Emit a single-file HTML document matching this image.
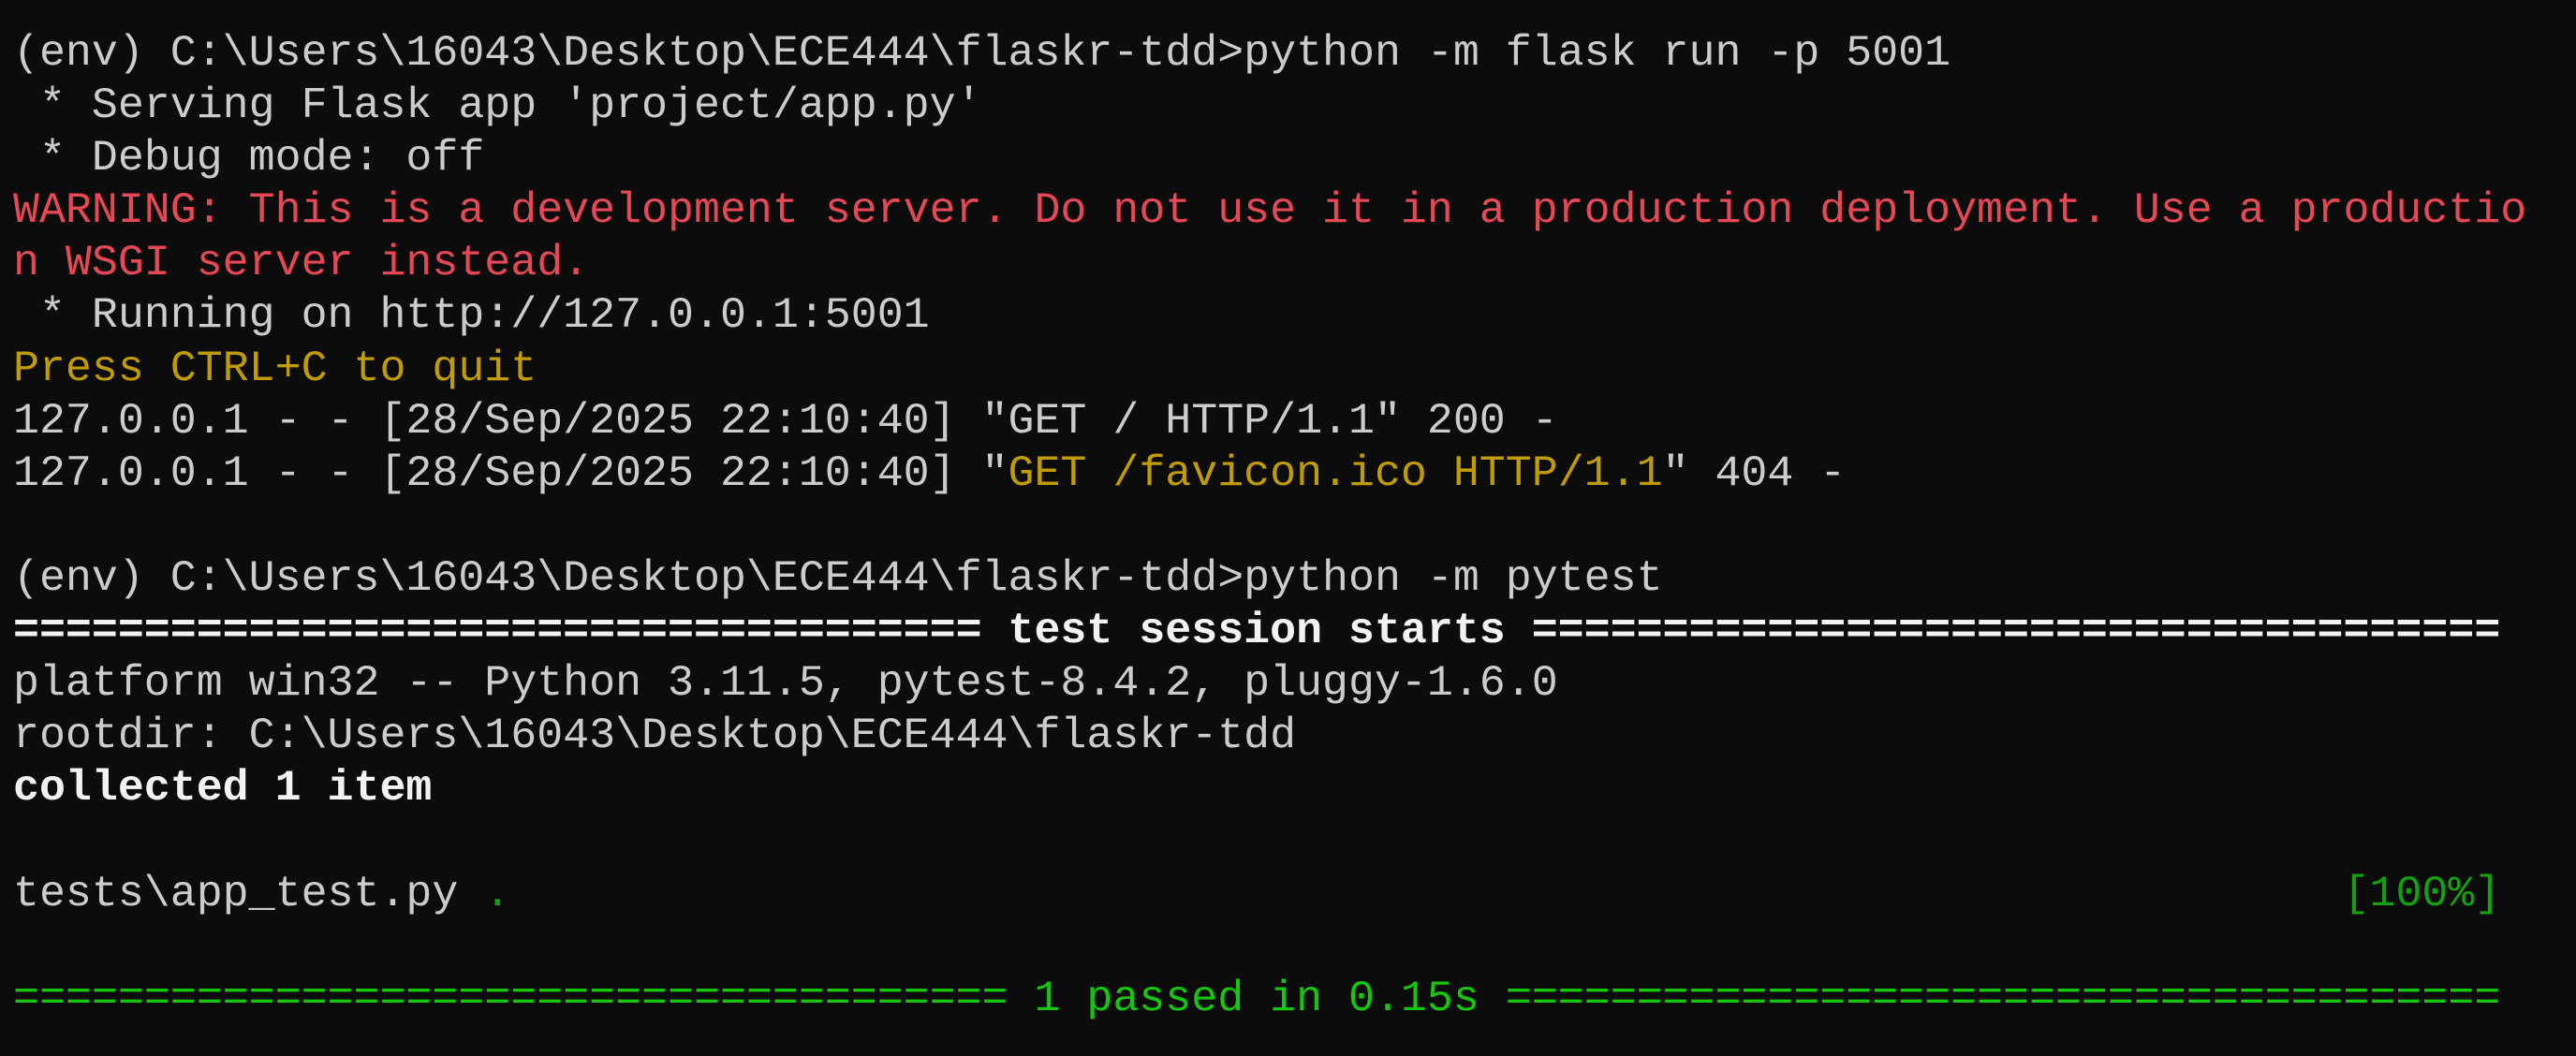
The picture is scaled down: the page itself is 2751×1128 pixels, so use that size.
<!DOCTYPE html>
<html><head><meta charset="utf-8"><style>
html,body{margin:0;padding:0;background:#0c0c0c;width:2751px;height:1128px;overflow:hidden}
pre{margin:0;padding:29px 0 0 14px;font-family:"Liberation Mono",monospace;font-size:46.6px;line-height:56.1px;color:#cccccc;white-space:pre}
.r{color:#e74856}.y{color:#c19c00}.g{color:#13a10e}.b{color:#f2f2f2;font-weight:bold}
.gb{color:#16c60c}
</style></head><body><pre>(env) C:\Users\16043\Desktop\ECE444\flaskr-tdd&gt;python -m flask run -p 5001
 * Serving Flask app 'project/app.py'
 * Debug mode: off
<span class="r">WARNING: This is a development server. Do not use it in a production deployment. Use a productio
n WSGI server instead.</span>
 * Running on http://127.0.0.1:5001
<span class="y">Press CTRL+C to quit</span>
127.0.0.1 - - [28/Sep/2025 22:10:40] "GET / HTTP/1.1" 200 -
127.0.0.1 - - [28/Sep/2025 22:10:40] "<span class="y">GET /favicon.ico HTTP/1.1</span>" 404 -

(env) C:\Users\16043\Desktop\ECE444\flaskr-tdd&gt;python -m pytest
<span class="b">===================================== test session starts =====================================</span>
platform win32 -- Python 3.11.5, pytest-8.4.2, pluggy-1.6.0
rootdir: C:\Users\16043\Desktop\ECE444\flaskr-tdd
<span class="b">collected 1 item</span>

tests\app_test.py <span class="g">.</span>                                                                      <span class="g">[100%]</span>

<span class="gb">====================================== 1 passed in 0.15s ======================================</span>
</pre></body></html>
